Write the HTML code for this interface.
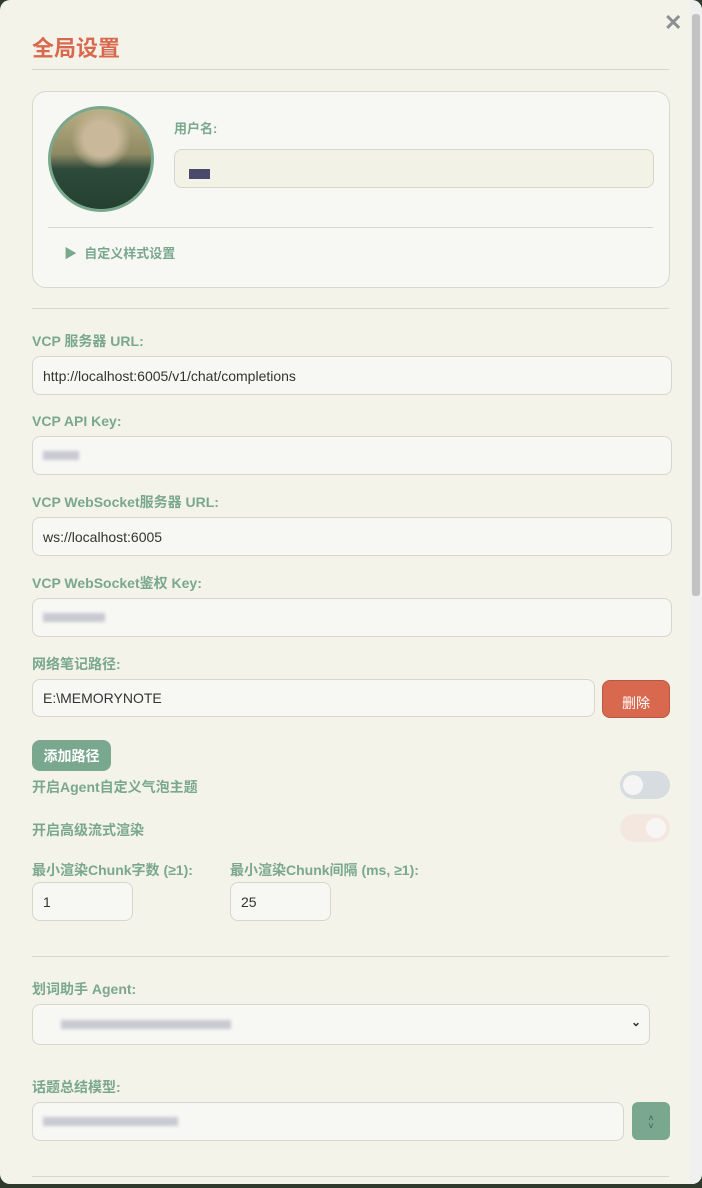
<!DOCTYPE html>
<html><head><meta charset="utf-8"><style>
*{box-sizing:border-box;margin:0;padding:0}
body{width:702px;height:1188px;background:#2f3a2c;overflow:hidden;font-family:"Liberation Sans","Noto Sans CJK SC",sans-serif;position:relative}
#m{position:absolute;left:0;top:0;width:702px;height:1184px;background:#f4f3e9;border-radius:10px;overflow:hidden}
.a{position:absolute}
.lb{position:absolute;left:32px;font-size:14px;font-weight:bold;color:#7aa88e;line-height:18px}
.in{position:absolute;background:#f7f7f4;border:1px solid #d6d6ca;border-radius:8px;font-size:14px;color:#333;padding-left:10px;display:flex;align-items:center}
.hr{position:absolute;left:32px;width:637px;height:1px;background:#d6d6ca}
.blur{display:inline-block;height:9px;background:#c9c9d2;filter:blur(1.5px)}
</style></head><body><div id="m">
<div class="a" style="left:32px;top:31px;font-size:22px;font-weight:bold;color:#d9694e">全局设置</div>
<div class="a" style="left:664px;top:10px;font-size:22px;font-weight:bold;color:#8a8f94">✕</div>
<div class="hr" style="top:69px"></div>
<div class="a" style="left:32px;top:91px;width:638px;height:197px;background:#f7f7f4;border:1px solid #d8d8cc;border-radius:14px"></div>
<div class="a" style="left:48px;top:106px;width:106px;height:106px;border-radius:50%;border:3px solid #7aa88e;background:radial-gradient(circle at 50% 30%,#c9b89a 0 20%,transparent 35%),linear-gradient(180deg,#b8ae84 0%,#8f8a63 45%,#2e4a3a 60%,#24402f 100%)"></div>
<div class="a" style="left:174px;top:118px;font-size:13px;font-weight:bold;color:#7aa88e">用户名:</div>
<div class="a" style="left:174px;top:149px;width:480px;height:39px;background:#f3f2e6;border:1px solid #d6d6ca;border-radius:8px"><div class="a" style="left:14px;top:19px;width:21px;height:10px;background:#4a4a6a"></div></div>
<div class="a" style="left:48px;top:227px;width:605px;height:1px;background:#d6d6ca"></div>
<div class="a" style="left:64px;top:243px;font-size:13px;font-weight:bold;color:#7aa88e">▶&nbsp;&nbsp;自定义样式设置</div>
<div class="hr" style="top:308px"></div>
<div class="lb" style="top:332px">VCP 服务器 URL:</div>
<div class="in" style="left:32px;top:356px;width:640px;height:39px">http://localhost:6005/v1/chat/completions</div>
<div class="lb" style="top:412px">VCP API Key:</div>
<div class="in" style="left:32px;top:436px;width:640px;height:39px"><span class="blur" style="width:36px"></span></div>
<div class="lb" style="top:493px">VCP WebSocket服务器 URL:</div>
<div class="in" style="left:32px;top:517px;width:640px;height:39px">ws://localhost:6005</div>
<div class="lb" style="top:574px">VCP WebSocket鉴权 Key:</div>
<div class="in" style="left:32px;top:598px;width:640px;height:39px"><span class="blur" style="width:62px"></span></div>
<div class="lb" style="top:655px">网络笔记路径:</div>
<div class="in" style="left:32px;top:679px;width:563px;height:38px">E:\MEMORYNOTE</div>
<div class="a" style="left:602px;top:680px;width:68px;height:38px;background:#d9694e;border:1px solid #b8583f;border-radius:8px;color:#fff;font-size:14px;text-align:center;line-height:44px">删除</div>
<div class="a" style="left:32px;top:740px;width:79px;height:31px;background:#7aa88e;border-radius:8px;color:#fff;font-size:14px;font-weight:bold;text-align:center;line-height:33px">添加路径</div>
<div class="lb" style="top:778px">开启Agent自定义气泡主题</div>
<div class="a" style="left:620px;top:771px;width:50px;height:28px;border-radius:14px;background:#d6dce0"><div class="a" style="left:3px;top:4px;width:20px;height:20px;border-radius:50%;background:#f5f5f5"></div></div>
<div class="lb" style="top:821px">开启高级流式渲染</div>
<div class="a" style="left:620px;top:814px;width:50px;height:28px;border-radius:14px;background:#f3e7df"><div class="a" style="left:26px;top:4px;width:20px;height:20px;border-radius:50%;background:#f8f6f4"></div></div>
<div class="lb" style="top:861px">最小渲染Chunk字数 (≥1):</div>
<div class="lb" style="top:861px;left:230px">最小渲染Chunk间隔 (ms, ≥1):</div>
<div class="in" style="left:32px;top:882px;width:101px;height:39px">1</div>
<div class="in" style="left:230px;top:882px;width:101px;height:39px">25</div>
<div class="hr" style="top:956px"></div>
<div class="lb" style="top:980px">划词助手 Agent:</div>
<div class="in" style="left:32px;top:1004px;width:618px;height:41px;padding-left:28px"><span class="blur" style="width:170px"></span><span class="a" style="right:8px;top:10px;font-size:12px;color:#333;font-weight:bold">⌄</span></div>
<div class="lb" style="top:1078px">话题总结模型:</div>
<div class="in" style="left:32px;top:1102px;width:592px;height:39px"><span class="blur" style="width:135px"></span></div>
<div class="a" style="left:632px;top:1102px;width:38px;height:38px;background:#7aa88e;border-radius:6px;color:#455;font-size:9px;text-align:center;line-height:8px;padding-top:12px">˄<br>˅</div>
<div class="hr" style="top:1176px"></div>
<div class="a" style="left:690px;top:0;width:12px;height:1184px;background:#f0f0f0"></div>
<div class="a" style="left:692px;top:14px;width:8px;height:582px;background:#c2c2c2;border-radius:3px"></div>
</div></body></html>
